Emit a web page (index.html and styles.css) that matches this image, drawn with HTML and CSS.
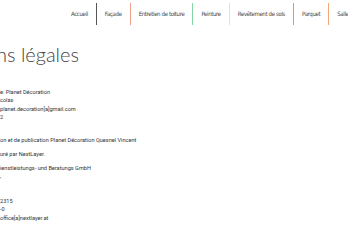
FILE: index.html
```html
<!DOCTYPE html>
<html lang="fr">
<head>
    <meta charset="UTF-8">
    <meta name="viewport" content="width=device-width, initial-scale=1.0">
    <title>Mentions légales</title>
    <link rel="stylesheet" href="styles.css">
</head>
<body>
    <nav class="main-nav">
        <a href="#" class="nav-item sep-dark">Accueil</a>
        <a href="#" class="nav-item sep-salmon">Façade</a>
        <a href="#" class="nav-item sep-green">Entretien de toiture</a>
        <a href="#" class="nav-item sep-yellow">Peinture</a>
        <a href="#" class="nav-item sep-blue">Revêtement de sols</a>
        <a href="#" class="nav-item sep-orange">Parquet</a>
        <a href="#" class="nav-item">Salle de bains</a>
    </nav>

    <section class="legal">
        <h1 class="legal-title">Mentions légales</h1>
        <p>e: Planet Décoration<br>colas<br>planet.decoration[a]gmail.com<br>2<br>&nbsp;</p>
        <p>on et de publication Planet Décoration Quesnel Vincent</p>
        <p>uré par NextLayer.</p>
        <p>ienstleistungs- und Beratungs GmbH<br>,<br>&nbsp;<br>&nbsp;<br>2315<br>-0<br>office[a]nextlayer.at</p>
    </section>
</body>
</html>
```

FILE: styles.css
```css
body {
    margin: 0;
    background-color: #fff;
    font-family: Roboto, Arial, sans-serif;
    overflow: hidden;
    width: 348px;
    height: 248px;
}
.main-nav {
    display: flex;
    padding: 3px 0 0 63px;
    height: 25px;
    white-space: nowrap;
}
.nav-item {
    display: block;
    padding: 0 8px;
    line-height: 22px;
    height: 22px;
    font-family: "DejaVu Sans Condensed", "DejaVu Sans", sans-serif;
    font-stretch: condensed;
    font-size: 6px;
    letter-spacing: -0.35px;
    color: #444;
    text-decoration: none;
    border-right: 1px solid transparent;
}
.sep-dark { border-right-color: #555; }
.sep-salmon { border-right-color: #ef9f8c; }
.sep-green { border-right-color: #86d6a4; }
.sep-yellow { border-right-color: #f7e59a; }
.sep-blue { border-right-color: #6cb8ee; }
.sep-orange { border-right-color: #f2a77a; }

.legal {
    color: #333;
}
.legal-title {
    font-family: Lato, sans-serif;
    font-weight: 300;
    font-size: 20px;
    line-height: 24px;
    color: #444;
    margin: 14px 0 22px -66px;
}
.legal p {
    font-size: 5.6px;
    line-height: 1.5;
    margin: 0 0 1em 0;
}
```
